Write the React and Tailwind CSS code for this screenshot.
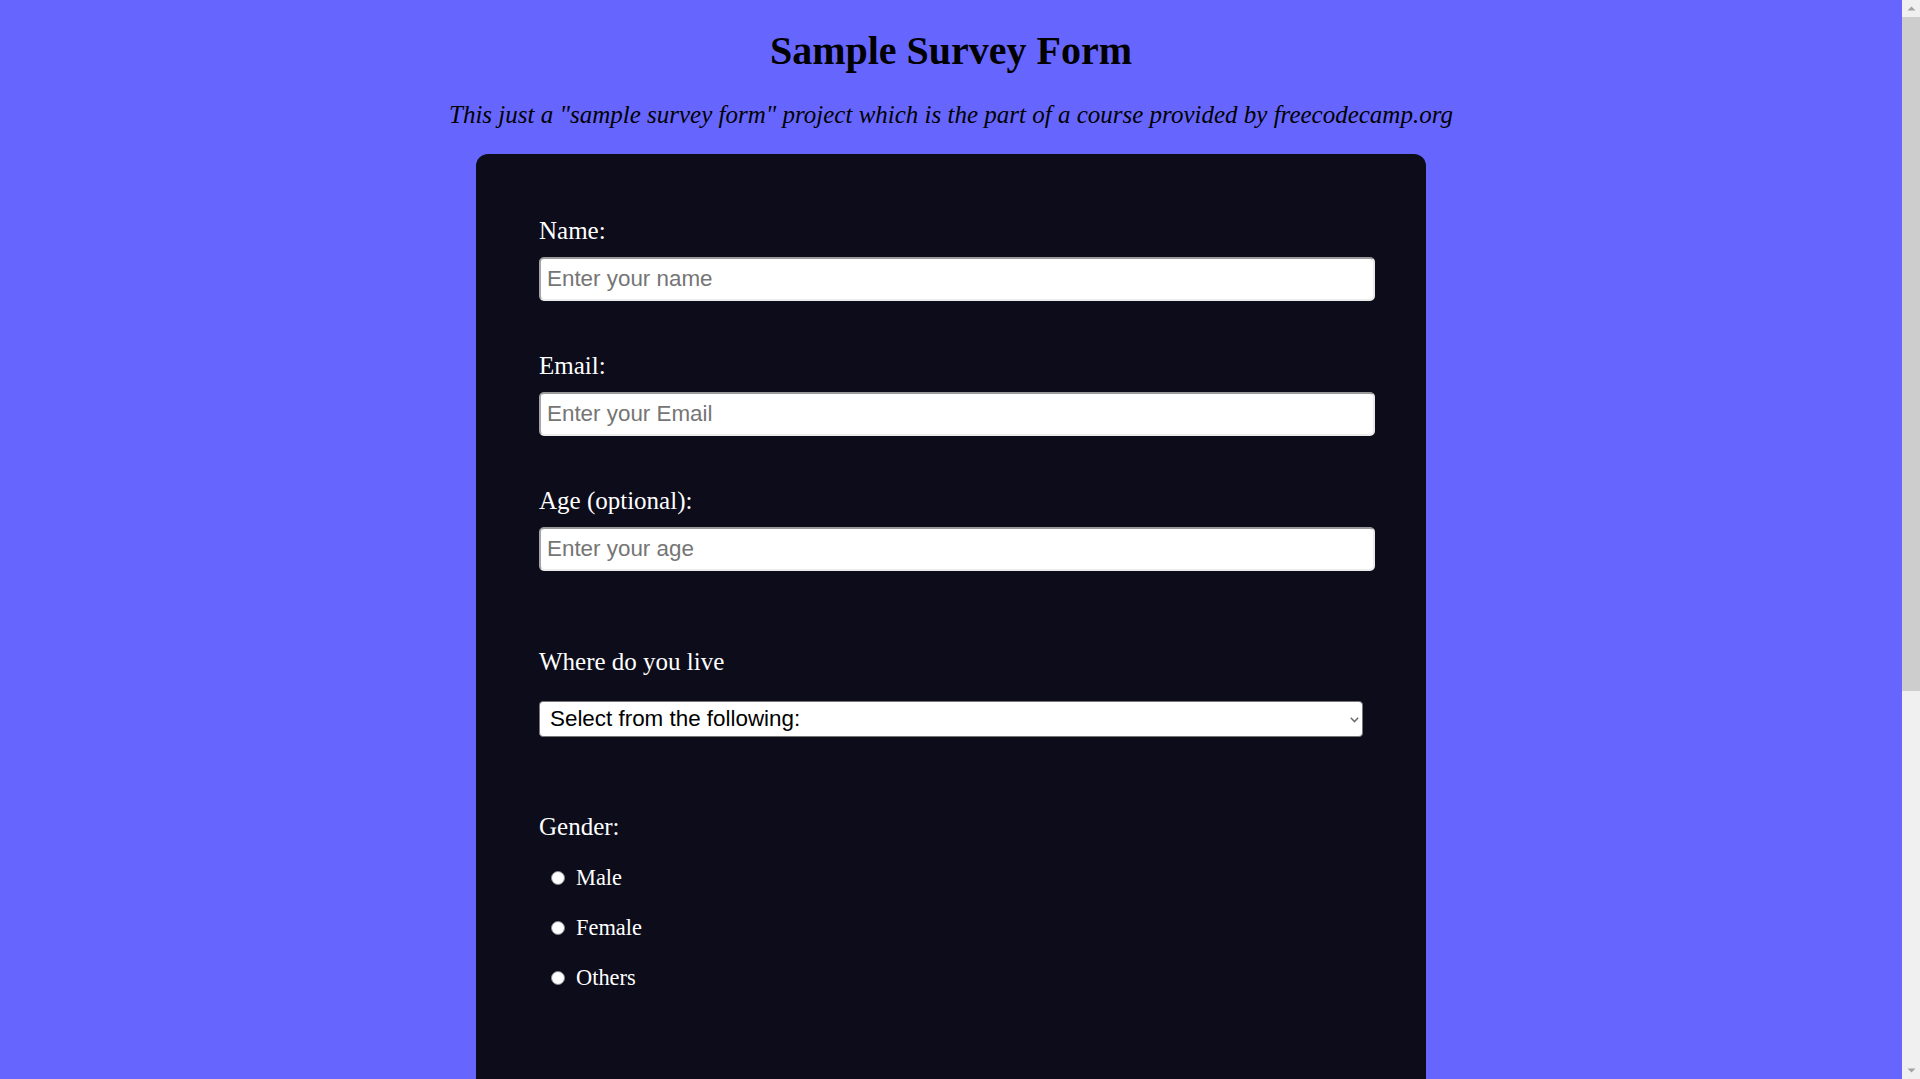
import { useState } from "react";

const fields = [
  { id: "name", label: "Name:", type: "text", placeholder: "Enter your name" },
  { id: "email", label: "Email:", type: "email", placeholder: "Enter your Email" },
  { id: "age", label: "Age (optional):", type: "number", placeholder: "Enter your age" },
];

const genders = ["Male", "Female", "Others"];

// barra de rolagem da janela (aparece no print)
const ScrollBar = () => (
  <div className="flex h-full w-[18px] shrink-0 flex-col bg-[#f0f0f0]">
    <div className="flex h-[17px] items-center justify-center">
      <svg width="9" height="5" viewBox="0 0 9 5">
        <path d="M0.5 4.5 L4.5 0.5 L8.5 4.5 Z" fill="#a3a3a3" />
      </svg>
    </div>
    <div className="h-[674px] bg-[#cdcdcd]" />
    <div className="flex-1" />
    <div className="flex h-[17px] items-center justify-center">
      <svg width="9" height="5" viewBox="0 0 9 5">
        <path d="M0.5 0.5 L4.5 4.5 L8.5 0.5 Z" fill="#a3a3a3" />
      </svg>
    </div>
  </div>
);

const SurveyForm = () => {
  const [gender, setGender] = useState("");

  return (
    <div className="flex h-screen overflow-hidden bg-[#6666ff]">
      <main className="flex-1 overflow-y-auto font-['Liberation_Serif',_'Times_New_Roman',_serif] text-black">
        <header className="flex flex-col items-center">
          <h1 className="mt-[28px] text-[40px] leading-[46px] font-bold">Sample Survey Form</h1>
          <p className="mt-[26px] text-[25px] leading-[29px] italic">
            This just a "sample survey form" project which is the part of a course provided by freecodecamp.org
          </p>
        </header>

        <form className="mx-auto mt-[25px] mb-[26px] w-[950px] min-h-[1493px] rounded-xl bg-[#0c0c1a] pl-[63px] pt-[62px] text-white">
          {/* inputs de texto */}
          <div className="flex flex-col gap-[50px]">
            {fields.map((f) => (
              <div key={f.id} className="flex flex-col gap-[12px]">
                <label htmlFor={f.id} className="text-[25px] leading-[29px]">
                  {f.label}
                </label>
                <input
                  id={f.id}
                  type={f.type}
                  placeholder={f.placeholder}
                  className="h-[44px] w-[836px] rounded-[5px] border-2 border-t-[#9a9a9a] border-l-[#a5a5a5] border-r-[#e9e9e9] border-b-[#ececec] bg-white pl-[6px] font-['Liberation_Sans',_Arial,_sans-serif] text-[22.4px] text-black outline-none placeholder:text-[#757575]"
                />
              </div>
            ))}
          </div>

          {/* select */}
          <div className="mt-[76px] flex flex-col gap-[25px]">
            <label htmlFor="country" className="text-[25px] leading-[29px]">
              Where do you live
            </label>
            <div className="relative w-[824px]">
              <select
                id="country"
                defaultValue=""
                className="h-[36px] w-full appearance-none rounded-[4px] border border-[#767676] bg-white pl-[10px] font-['Liberation_Sans',_Arial,_sans-serif] text-[22.4px] text-black outline-none"
              >
                <option value="">Select from the following:</option>
                <option value="asia">Asia</option>
                <option value="europe">Europe</option>
                <option value="america">America</option>
              </select>
              <svg
                className="pointer-events-none absolute right-[4px] top-[16px]"
                width="9"
                height="6"
                viewBox="0 0 9 6"
                fill="none"
              >
                <path d="M0.8 0.8 L4.5 4.6 L8.2 0.8" stroke="#6d6d6d" strokeWidth="1.5" />
              </svg>
            </div>
          </div>

          {/* radios */}
          <div className="mt-[75px] flex flex-col">
            <span className="text-[25px] leading-[29px]">Gender:</span>
            <div className="mt-[24px] flex flex-col gap-[24px]">
              {genders.map((g) => (
                <label
                  key={g}
                  className="flex h-[26px] cursor-pointer items-center text-[22.4px] leading-[26px]"
                  onClick={() => setGender(g)}
                >
                  <span className="ml-[12px] mr-[11px] flex h-[14px] w-[14px] items-center justify-center rounded-full border border-[#8a8a8a] bg-white">
                    {gender === g && <span className="h-[8px] w-[8px] rounded-full bg-[#0075ff]" />}
                  </span>
                  {g}
                </label>
              ))}
            </div>
          </div>
        </form>
      </main>
      <ScrollBar />
    </div>
  );
};

export default SurveyForm;
